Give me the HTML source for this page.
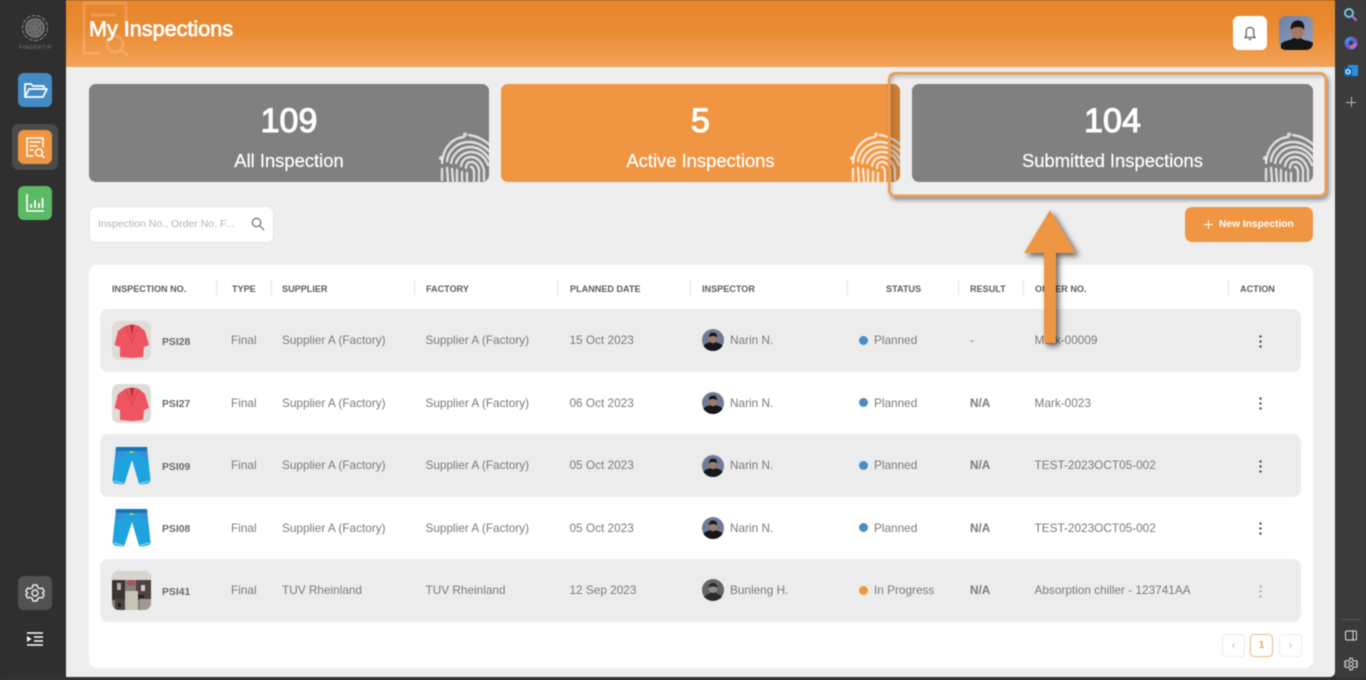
<!DOCTYPE html>
<html lang="en"><head><meta charset="utf-8"><title>My Inspections</title>
<style>
*{box-sizing:border-box;margin:0;padding:0}
html,body{width:1366px;height:680px;overflow:hidden;background:#2f2f2f}
body{font-family:"Liberation Sans",Arial,sans-serif;position:relative}
#w{position:absolute;left:0;top:0;width:1366px;height:680px;overflow:hidden;filter:blur(.45px)}
.a{position:absolute}
.t{position:absolute;white-space:nowrap;line-height:16px;transform:translateY(-8px)}
.c{font-size:11.8px;color:#7b7b7b}
.b{font-size:10.4px;font-weight:bold;color:#6a6a6a;margin-top:1.5px}
.h{font-size:9.1px;font-weight:bold;color:#5c5c5c}
.dv{position:absolute;top:280px;width:1px;height:15px;background:#e2e2e2}
.row{position:absolute;left:100px;width:1201px;background:#ececec;border-radius:8px}
.th{position:absolute;left:112px;width:39px;height:39px;border-radius:7px;overflow:hidden}
.dot{position:absolute;left:859px;width:9px;height:9px;border-radius:50%;background:#4a8cc4}
.kb{position:absolute;left:1259px;width:3px;height:14px;background:radial-gradient(circle,#555 1.1px,transparent 1.4px) 0 0/3px 5px}
.card{position:absolute;top:84px;height:98px;border-radius:7px;overflow:hidden;color:#fff;text-align:center}
.card .n{position:absolute;left:0;right:0;top:16px;font-size:34px;line-height:42px;font-weight:normal;-webkit-text-stroke:1.1px #fff}
.card .l{position:absolute;left:0;right:0;top:65px;font-size:18.4px;line-height:24px;-webkit-text-stroke:.2px #fff}
.card svg{position:absolute;right:-1px;bottom:0}
.pg{position:absolute;top:634px;width:23px;height:23px;border:1px solid #ececec;border-radius:4px;background:#fff;color:#c4c4c4;font-size:12px;line-height:21px;text-align:center}
.nav{position:absolute;left:18px;width:34px;height:34px;border-radius:6px}
</style></head><body>
<svg width="0" height="0" style="position:absolute"><defs>
<symbol id="fp" viewBox="0 0 52 50">
<g fill="none" stroke="#fff" stroke-opacity=".74" stroke-width="2.400" stroke-linecap="round">
<path d="M4 31C5 15 15 6 26 5"/><path d="M31 3C38 4 45 7 52 13"/><circle cx="3" cy="26" r=".8"/><circle cx="27" cy="2.500" r=".8"/>
<path d="M9 29C10 19 19 10 31 10C39 10 46 14 52 20"/>
<path d="M13 31C15 21 23 15 32 15C40 15 47 20 52 28"/>
<path d="M18 31C20 25 26 20 33 20C41 20 47 25 50 33"/>
<path d="M23 34C24 28 28 25 33 25C39 25 44 30 46 38V48"/>
<path d="M28 36C28 32 30 30 33 30C37 30 40 33 41 38V49"/>
<path d="M33 35C35 35 36 38 36 41V49"/>
<path d="M4 37V48M9 36L10 49M14 37L15 49M19 38V49M24 40V49M29 41V49"/>
</g></symbol>
<symbol id="jk" viewBox="0 0 39 39">
<rect width="39" height="39" fill="#dfdcd8"/>
<path d="M13 5L18 3.500H22L27 5L33 10L37 24L32 26L31 36L20 37L8 36L8 26L2.500 24L6 10Z" fill="#ee5560"/>
<path d="M18 4L20 15L22 4" fill="#b9303c"/>
<path d="M14 6L20 21M26 6L20 21" stroke="#dc4450" fill="none"/>
</symbol>
<symbol id="pn" viewBox="0 0 39 39">
<path d="M4 1H35L38.500 34Q38.500 37 36 37.500L29 38.500Q27 38.500 26.500 36L20 14L13 36Q12.500 38.500 10 38.500L3 37.500Q.5 37 .5 34Z" fill="#1fa3de"/>
<path d="M4 1H35L35.400 5H3.600Z" fill="#1179ba"/>
<path d="M4 5H13C13 10 9 12 3.500 12ZM35 5H26C26 10 30 12 35.600 12Z" fill="#3a8fd2"/>
<rect x="17.500" y="5" width="4" height="2" fill="#b9c65c"/>
<path d="M2 35L11 37.500M37 35L28 37.500" stroke="#8fd3ef" stroke-width="1.200"/>
</symbol>
<symbol id="av" viewBox="0 0 22 22">
<circle cx="11" cy="11" r="11" fill="#6f7b97"/>
<path d="M1.500 17C3 14 7 14 8.500 13L13.500 13C15 14 19 14 20.500 17C18 20.500 14.500 22 11 22C7.500 22 4 20.500 1.500 17Z" fill="#15171b"/>
<ellipse cx="11" cy="9.500" rx="3.800" ry="4.800" fill="#a37a66"/>
<path d="M7 8.500C6.500 5 8.500 3.500 11 3.500C13.500 3.500 15.500 5 15 8.500C14 6.500 8 6.500 7 8.500Z" fill="#17171a"/>
</symbol>
</defs></svg>
<div id="w">
<!-- left sidebar -->
<div class="a" style="left:0;top:0;width:66px;height:680px;background:#2f2f2f"></div>
<svg class="a" style="left:21px;top:14px" width="28" height="28" viewBox="0 0 28 28"><circle cx="14" cy="14" r="12.500" fill="none" stroke="#8d8478" stroke-width="1" stroke-dasharray="4 1.500"/><circle cx="14" cy="14" r="10" fill="#6d6d6d"/><g fill="none" stroke="#4a4a4a"><circle cx="14" cy="14" r="7" stroke-dasharray="3 2"/><circle cx="14" cy="14" r="4" stroke-dasharray="2 2"/></g></svg>
<div class="t" style="left:19px;top:48px;font-size:5px;letter-spacing:.7px;color:#7d7d7d">FINGERTIP</div>
<div class="nav" style="top:73px;background:#438bc5"><svg width="34" height="34" viewBox="0 0 34 34" fill="none" stroke="#fff" stroke-width="1.700" stroke-linejoin="round"><path d="M7 24V11H13L15 13H26V16"/><path d="M7 24L11 16H29L25 24Z"/></svg></div>
<div class="a" style="left:12px;top:124px;width:46px;height:46px;border-radius:7px;background:#4b4b4b"></div>
<div class="nav" style="top:130px;background:#ef9440"><svg width="34" height="34" viewBox="0 0 34 34" fill="none" stroke="#fff" stroke-width="1.500" stroke-linecap="round"><path d="M15 26H9V8H25V17"/><path d="M12 12H22M12 16H19M12 20H15"/><circle cx="21" cy="22.500" r="3.500"/><path d="M23.500 25L26 27.500"/></svg></div>
<div class="nav" style="top:186px;background:#5cb965"><svg width="34" height="34" viewBox="0 0 34 34" fill="none" stroke="#fff" stroke-width="1.600"><path d="M9 8V25H26"/><path d="M13 22V18M17 22V14M21 22V17M24.500 22V12" stroke-width="1.800"/></svg></div>
<div class="nav" style="top:576px;background:#525252"><svg width="34" height="34" viewBox="0 0 34 34" fill="none" stroke="#eee" stroke-width="1.400" stroke-linejoin="round"><circle cx="17" cy="17" r="3"/><path d="M15 9H19L19.700 11.500L21.800 12.700L24.300 12L26.200 15.200L24.400 17L26.200 18.800L24.300 22L21.800 21.300L19.700 22.500L19 25H15L14.300 22.500L12.200 21.300L9.700 22L7.800 18.800L9.600 17L7.800 15.200L9.700 12L12.200 12.700L14.300 11.500Z"/></svg></div>
<svg class="a" style="left:26px;top:631px" width="18" height="16" viewBox="0 0 18 16" stroke="#fff" stroke-width="1.400"><path d="M1 2H17M8 6H17M8 10H17M1 14H17"/><path d="M1 5L5.500 8L1 11Z" fill="#fff" stroke="none"/></svg>

<!-- main -->
<div class="a" style="left:66px;top:0;width:1269px;height:677px;background:#eee;border-radius:0 0 5px 0"></div>
<div class="a" style="left:66px;top:0;width:1269px;height:67px;background:linear-gradient(180deg,#e6852a 0%,#ea8b33 45%,#f3a35a 100%)"></div>
<svg class="a" style="left:80px;top:0" width="52" height="58" viewBox="0 0 52 58" fill="none" stroke="#fff" stroke-opacity=".16" stroke-width="3"><path d="M20 53H4V3H46V30"/><path d="M11 15H36"/><circle cx="35" cy="44" r="8"/><path d="M41 50L48 56"/></svg>
<div class="t" style="left:89px;top:29px;font-size:21.600px;-webkit-text-stroke:.75px #fff;color:#fff;line-height:24px;transform:translateY(-12px)">My Inspections</div>
<div class="a" style="left:1233px;top:16px;width:34px;height:34px;border-radius:6px;background:#fff"><svg width="34" height="34" viewBox="0 0 34 34" fill="none" stroke="#555" stroke-width="1.200"><path d="M12 21.500H22L20.800 19.500V15C20.800 12.800 19.200 11.500 17 11.500C14.800 11.500 13.200 12.800 13.200 15V19.500Z"/><path d="M15.800 23.500H18.200"/></svg></div>
<div class="a" style="left:1279px;top:16px;width:34px;height:34px;border-radius:7px;overflow:hidden;background:linear-gradient(135deg,#6c7fa3,#98a3bb)"><svg width="34" height="34" viewBox="0 0 34 34"><path d="M2 34V28C5 24 12 25 14 22H22C24 25 31 24 34 27V34Z" fill="#14161a"/><ellipse cx="18.500" cy="15" rx="6" ry="8" fill="#a67860"/><path d="M12 14C11 7 15 4.500 19 4.500C23 4.500 26 7 25 14C24 10 14 10 12 14Z" fill="#17171a"/></svg></div>

<!-- cards -->
<div class="card" style="left:89px;width:400px;background:#808080"><div class="n">109</div><div class="l">All Inspection</div><svg width="52" height="50"><use href="#fp"/></svg></div>
<div class="card" style="left:501px;width:399px;background:#f09643"><div class="n">5</div><div class="l">Active Inspections</div><svg width="52" height="50"><use href="#fp"/></svg></div>
<div class="a" style="left:891px;top:84px;width:9px;height:98px;background:rgba(0,0,0,.16);border-radius:0 7px 7px 0"></div>
<div class="card" style="left:912px;width:401px;background:#808080"><div class="n">104</div><div class="l">Submitted Inspections</div><svg width="52" height="50"><use href="#fp"/></svg></div>
<!-- highlight -->
<div class="a" style="left:888px;top:72px;width:439px;height:125px;border-radius:7px;box-shadow:2px 3px 5px rgba(0,0,0,.4),inset 3px 4px 5px rgba(0,0,0,.26)"></div>
<svg class="a" style="left:888px;top:72px" width="439" height="125"><rect x="1.250" y="1.250" width="436.500" height="122.500" rx="6" fill="none" stroke="#ee9c52" stroke-width="2.500"/></svg>

<!-- search and button -->
<div class="a" style="left:89px;top:206px;width:185px;height:37px;background:#fff;border:1px solid #e6e6e6;border-radius:7px"></div>
<div class="t" style="left:98px;top:224px;font-size:10.500px;color:#b4b4b4">Inspection No., Order No. F...</div>
<svg class="a" style="left:251px;top:217px" width="14" height="14" viewBox="0 0 14 14" fill="none" stroke="#777" stroke-width="1.300"><circle cx="5.500" cy="5.500" r="4.200"/><path d="M8.700 8.700L13 13"/></svg>
<div class="a" style="left:1185px;top:207px;width:128px;height:35px;background:#f09643;border-radius:7px"></div>
<div class="a" style="left:1204px;top:223.500px;width:9px;height:1.500px;background:#fff"></div><div class="a" style="left:1207.800px;top:220px;width:1.500px;height:9px;background:#fff"></div>
<div class="t" style="left:1219px;top:225px;font-size:10.200px;font-weight:bold;color:#fff">New Inspection</div>

<!-- table -->
<div class="a" style="left:89px;top:265px;width:1224px;height:403px;background:#fff;border-radius:8px"></div>
<div class="t h" style="left:112px;top:289px">INSPECTION NO.</div><div class="dv" style="left:216px"></div>
<div class="t h" style="left:232px;top:289px">TYPE</div><div class="dv" style="left:271px"></div>
<div class="t h" style="left:282px;top:289px">SUPPLIER</div><div class="dv" style="left:414px"></div>
<div class="t h" style="left:426px;top:289px">FACTORY</div><div class="dv" style="left:557px"></div>
<div class="t h" style="left:570px;top:289px">PLANNED DATE</div><div class="dv" style="left:690px"></div>
<div class="t h" style="left:702px;top:289px">INSPECTOR</div><div class="dv" style="left:847px"></div>
<div class="t h" style="left:886px;top:289px">STATUS</div><div class="dv" style="left:958px"></div>
<div class="t h" style="left:970px;top:289px">RESULT</div><div class="dv" style="left:1023px"></div>
<div class="t h" style="left:1035px;top:289px">ORDER NO.</div><div class="dv" style="left:1228px"></div>
<div class="t h" style="left:1240px;top:289px">ACTION</div>

<div class="row" style="top:309px;height:63px"></div>
<div class="row" style="top:434px;height:63px"></div>
<div class="row" style="top:559px;height:63px"></div>

<!-- row 1 -->
<svg class="th" style="top:321px"><use href="#jk" width="39" height="39"/></svg>
<div class="t b" style="left:162px;top:341px">PSI28</div><div class="t c" style="left:231px;top:340px">Final</div><div class="t c" style="left:282px;top:340px">Supplier A (Factory)</div><div class="t c" style="left:425.500px;top:340px">Supplier A (Factory)</div><div class="t c" style="left:569.500px;top:340px">15 Oct 2023</div>
<svg class="a" style="left:702px;top:329px" width="22" height="22"><use href="#av"/></svg><div class="t c" style="left:730px;top:340px">Narin N.</div>
<div class="dot" style="top:336px"></div><div class="t c" style="left:874px;top:340px">Planned</div><div class="t c" style="left:970px;top:340px">-</div><div class="t c" style="left:1034.500px;top:340px">Mark-00009</div><div class="kb" style="top:334px"></div>
<!-- row 2 -->
<svg class="th" style="top:384px"><use href="#jk" width="39" height="39"/></svg>
<div class="t b" style="left:162px;top:403.500px">PSI27</div><div class="t c" style="left:231px;top:402.500px">Final</div><div class="t c" style="left:282px;top:402.500px">Supplier A (Factory)</div><div class="t c" style="left:425.500px;top:402.500px">Supplier A (Factory)</div><div class="t c" style="left:569.500px;top:402.500px">06 Oct 2023</div>
<svg class="a" style="left:702px;top:392px" width="22" height="22"><use href="#av"/></svg><div class="t c" style="left:730px;top:402.500px">Narin N.</div>
<div class="dot" style="top:398px"></div><div class="t c" style="left:874px;top:402.500px">Planned</div><div class="t c" style="left:970px;top:402.500px;font-weight:bold">N/A</div><div class="t c" style="left:1034.500px;top:402.500px">Mark-0023</div><div class="kb" style="top:396px"></div>
<!-- row 3 -->
<svg class="th" style="top:446px"><use href="#pn" width="39" height="39"/></svg>
<div class="t b" style="left:162px;top:466px">PSI09</div><div class="t c" style="left:231px;top:465px">Final</div><div class="t c" style="left:282px;top:465px">Supplier A (Factory)</div><div class="t c" style="left:425.500px;top:465px">Supplier A (Factory)</div><div class="t c" style="left:569.500px;top:465px">05 Oct 2023</div>
<svg class="a" style="left:702px;top:455px" width="22" height="22"><use href="#av"/></svg><div class="t c" style="left:730px;top:465px">Narin N.</div>
<div class="dot" style="top:461px"></div><div class="t c" style="left:874px;top:465px">Planned</div><div class="t c" style="left:970px;top:465px;font-weight:bold">N/A</div><div class="t c" style="left:1034.500px;top:465px">TEST-2023OCT05-002</div><div class="kb" style="top:459px"></div>
<!-- row 4 -->
<svg class="th" style="top:508px"><use href="#pn" width="39" height="39"/></svg>
<div class="t b" style="left:162px;top:528px">PSI08</div><div class="t c" style="left:231px;top:527.500px">Final</div><div class="t c" style="left:282px;top:527.500px">Supplier A (Factory)</div><div class="t c" style="left:425.500px;top:527.500px">Supplier A (Factory)</div><div class="t c" style="left:569.500px;top:527.500px">05 Oct 2023</div>
<svg class="a" style="left:702px;top:517px" width="22" height="22"><use href="#av"/></svg><div class="t c" style="left:730px;top:527.500px">Narin N.</div>
<div class="dot" style="top:523px"></div><div class="t c" style="left:874px;top:527.500px">Planned</div><div class="t c" style="left:970px;top:527.500px;font-weight:bold">N/A</div><div class="t c" style="left:1034.500px;top:527.500px">TEST-2023OCT05-002</div><div class="kb" style="top:521px"></div>
<!-- row 5 -->
<svg class="th" style="top:571px" viewBox="0 0 39 39"><rect width="39" height="39" fill="#8a8078"/><rect width="39" height="9" fill="#d8d4d0"/><rect y="9" width="13" height="20" fill="#3c3434"/><rect x="24" y="9" width="15" height="20" fill="#4e4242"/><rect x="13" y="20" width="13" height="19" fill="#c9c2b6"/><rect x="3" y="28" width="10" height="11" fill="#4c4640"/><rect x="28" y="28" width="11" height="11" fill="#a09a90"/><rect x="15" y="9" width="8" height="5" fill="#a4525c"/><rect x="5" y="12" width="4" height="7" fill="#b6aaa6"/><rect x="29" y="14" width="4" height="6" fill="#d0c8c2"/><rect x="6" y="32" width="3" height="4" fill="#1e1c1a"/><rect x="26" y="24" width="6" height="3" fill="#222"/></svg>
<div class="t b" style="left:162px;top:591px">PSI41</div><div class="t c" style="left:231px;top:590px">Final</div><div class="t c" style="left:282px;top:590px">TUV Rheinland</div><div class="t c" style="left:425.500px;top:590px">TUV Rheinland</div><div class="t c" style="left:569.500px;top:590px">12 Sep 2023</div>
<svg class="a" style="left:702px;top:579px" width="22" height="22"><circle cx="11" cy="11" r="11" fill="#666"/><path d="M2 18C4 15 8 15 9 13H13C14 15 18 15 20 18C15 23 7 23 2 18Z" fill="#2a2a2a"/><circle cx="11" cy="9.500" r="4.500" fill="#8d8d8d"/><path d="M6.500 9C6.500 5 9 4 11 4C13 4 15.500 5 15.500 9C13 7 9 7 6.500 9Z" fill="#2b2b2b"/></svg><div class="t c" style="left:730px;top:590px">Bunleng H.</div>
<div class="dot" style="top:586px;background:#ef9440"></div><div class="t c" style="left:874px;top:590px">In Progress</div><div class="t c" style="left:970px;top:590px;font-weight:bold">N/A</div><div class="t c" style="left:1034.500px;top:590px">Absorption chiller - 123741AA</div><div class="kb" style="top:584px;opacity:.4"></div>

<!-- pagination -->
<div class="pg" style="left:1222px">&#8249;</div>
<div class="pg" style="left:1250px;border-color:#eeb77f;color:#e9a866;font-weight:bold;font-size:10.500px">1</div>
<div class="pg" style="left:1279px">&#8250;</div>

<!-- arrow -->
<svg class="a" style="left:1015px;top:200px;filter:drop-shadow(3px 3px 3px rgba(0,0,0,.6))" width="70" height="150" viewBox="0 0 70 150"><path d="M35 10L61 53H41V143H29V53H9Z" fill="#ef9644"/></svg>

<!-- right rail -->
<div class="a" style="left:1335px;top:0;width:31px;height:680px;background:#3b3b3b"></div>
<div class="a" style="left:0;top:677px;width:1366px;height:3px;background:#333"></div>
<svg class="a" style="left:1343px;top:7px" width="15" height="15" viewBox="0 0 15 15" fill="none"><circle cx="6" cy="6" r="4" stroke="#74c4e4" stroke-width="2"/><path d="M9 9L13.500 13.500" stroke="#b56ad6" stroke-width="2.200"/></svg>
<svg class="a" style="left:1344px;top:36px" width="14" height="14" viewBox="0 0 14 14"><circle cx="7" cy="7" r="6.500" fill="#6a5ad0"/><path d="M1 7A6 6 0 0 1 7 1L9 4A4 4 0 0 0 4 8Z" fill="#3b8fe0"/><path d="M13 7A6 6 0 0 1 7 13L5 10L10 8Z" fill="#c868c8"/><circle cx="7" cy="7" r="2.200" fill="#3b3b3b"/></svg>
<svg class="a" style="left:1344px;top:64px" width="14" height="14" viewBox="0 0 14 14"><rect x="4" y="1" width="10" height="11" rx="1" fill="#2a8fdc"/><rect x="0" y="3.500" width="8" height="8.500" rx="1" fill="#0f6cbd"/><circle cx="4" cy="7.700" r="2" fill="none" stroke="#fff" stroke-width="1.200"/></svg>
<div class="a" style="left:1346px;top:102px;width:10px;height:1px;background:#bbb"></div><div class="a" style="left:1351px;top:97px;width:1px;height:10px;background:#bbb"></div>
<div class="a" style="left:1341px;top:619px;width:20px;height:1px;background:#5a5a5a"></div>
<svg class="a" style="left:1345px;top:630px" width="12" height="11" viewBox="0 0 12 11" fill="none" stroke="#ddd"><rect x=".5" y="1" width="11" height="9" rx="1.500"/><path d="M8 1V10"/></svg>
<svg class="a" style="left:1344px;top:657px" width="14" height="14" viewBox="0 0 34 34" fill="none" stroke="#ddd" stroke-width="2.600" stroke-linejoin="round"><circle cx="17" cy="17" r="5"/><path d="M14 3H20L21 8L25 10L30 8.500L33 13.500L29 17L33 20.500L30 25.500L25 24L21 26L20 31H14L13 26L9 24L4 25.500L1 20.500L5 17L1 13.500L4 8.500L9 10L13 8Z"/></svg>
</div>
</body></html>
